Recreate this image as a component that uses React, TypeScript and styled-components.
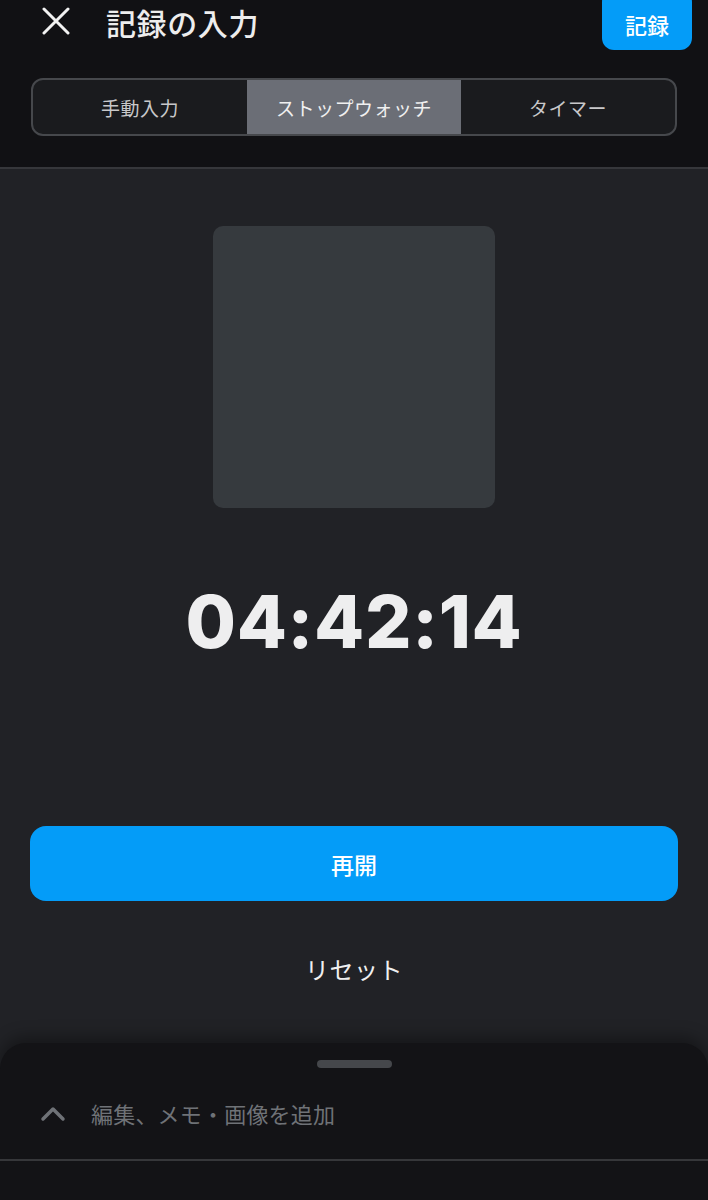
import React from "react";
import styled, { createGlobalStyle } from "styled-components";

const Global = createGlobalStyle`
  html, body { margin: 0; padding: 0; background: #212226; }
  * { box-sizing: border-box; }
  body { font-family: "Noto Sans CJK JP", "Noto Sans", sans-serif; }
`;

const Page = styled.div`
  width: 708px;
  height: 1200px;
  display: flex;
  flex-direction: column;
  overflow: hidden;
  background: #212226;
`;

const Header = styled.header`
  background: #111114;
  border-bottom: 2px solid #36373b;
  padding-bottom: 31px;
`;

const TopBar = styled.div`
  height: 50px;
  display: flex;
  align-items: center;
  padding: 0 16px 0 40px;
`;

const IconButton = styled.button`
  width: 32px;
  height: 32px;
  padding: 0;
  border: none;
  background: none;
  display: flex;
  align-items: center;
  justify-content: center;
  color: #f2f2f2;
  margin-top: -9px;
`;

const Title = styled.h1`
  margin: -7px 0 0 34px;
  font-size: 30px;
  line-height: 36px;
  font-weight: 500;
  color: #ededed;
  letter-spacing: 0.6px;
  flex: 1;
`;

const RecordButton = styled.button`
  width: 90px;
  height: 60px;
  margin-top: -10px;
  border: none;
  border-radius: 12px;
  background: #049cf8;
  color: #ffffff;
  font-family: inherit;
  font-size: 22px;
  font-weight: 500;
  padding-top: 8px;
`;

const Segmented = styled.div`
  margin: 28px 31px 0;
  height: 58px;
  border: 2px solid #46484c;
  border-radius: 12px;
  background: #1a1b1e;
  display: grid;
  grid-template-columns: 1fr 1fr 1fr;
  overflow: hidden;
`;

const Segment = styled.div<{ $active?: boolean }>`
  display: flex;
  align-items: center;
  justify-content: center;
  font-size: 19px;
  color: ${(p) => (p.$active ? "#f0f0f0" : "#c8c8ca")};
  background: ${(p) => (p.$active ? "#6b6e76" : "transparent")};
  letter-spacing: 0.5px;
`;

const Main = styled.main`
  flex: 1;
  display: flex;
  flex-direction: column;
  align-items: center;
  padding: 57px 30px 0;
`;

const ImageBox = styled.div`
  width: 282px;
  height: 282px;
  border-radius: 10px;
  background: #363a3e;
`;

const Timer = styled.div`
  margin-top: 77px;
  font-family: Inter, "Liberation Sans", sans-serif;
  font-weight: 800;
  font-size: 73px;
  line-height: 1;
  color: #eeeeef;
  letter-spacing: 0.7px;
`;

const PrimaryButton = styled.button`
  margin-top: 168px;
  width: 100%;
  height: 75px;
  border: none;
  border-radius: 16px;
  background: #049cf8;
  color: #ffffff;
  font-family: inherit;
  font-size: 23px;
  font-weight: 500;
`;

const TextButton = styled.button`
  margin-top: 50px;
  border: none;
  background: none;
  color: #f0f0f0;
  font-family: inherit;
  font-size: 24px;
  line-height: 36px;
  padding: 0;
  letter-spacing: 0.5px;
`;

const Sheet = styled.section`
  height: 157px;
  flex-shrink: 0;
  background: #131316;
  border-radius: 26px 26px 0 0;
  box-shadow: 0 -6px 16px rgba(0, 0, 0, 0.35);
  display: flex;
  flex-direction: column;
  padding-top: 17px;
`;

const Handle = styled.div`
  align-self: center;
  width: 75px;
  height: 8px;
  border-radius: 4px;
  background: #45474b;
`;

const SheetRow = styled.div`
  margin-top: 16px;
  height: 60px;
  display: flex;
  align-items: center;
  padding-left: 40px;
  gap: 25px;
  color: #6f7277;
`;

const SheetLabel = styled.span`
  font-size: 22px;
  letter-spacing: 0.2px;
  margin-top: -2px;
`;

const Divider = styled.div`
  margin-top: 15px;
  height: 2px;
  background: #36373a;
`;

export default function App() {
  return (
    <Page>
      <Global />
      <Header>
        <TopBar>
          <IconButton aria-label="閉じる">
            <svg width="30" height="28" viewBox="0 0 30 28">
              <path d="M3 2 L27 26 M27 2 L3 26" stroke="currentColor" strokeWidth="3" strokeLinecap="round" fill="none" />
            </svg>
          </IconButton>
          <Title>記録の入力</Title>
          <RecordButton>記録</RecordButton>
        </TopBar>
        <Segmented>
          <Segment>手動入力</Segment>
          <Segment $active>ストップウォッチ</Segment>
          <Segment>タイマー</Segment>
        </Segmented>
      </Header>
      <Main>
        <ImageBox />
        <Timer>04:42:14</Timer>
        <PrimaryButton>再開</PrimaryButton>
        <TextButton>リセット</TextButton>
      </Main>
      <Sheet>
        <Handle />
        <SheetRow>
          <svg width="26" height="16" viewBox="0 0 26 16">
            <path d="M3 13 L13 3 L23 13" stroke="currentColor" strokeWidth="3.5" strokeLinecap="round" strokeLinejoin="round" fill="none" />
          </svg>
          <SheetLabel>編集、メモ・画像を追加</SheetLabel>
        </SheetRow>
        <Divider />
      </Sheet>
    </Page>
  );
}
